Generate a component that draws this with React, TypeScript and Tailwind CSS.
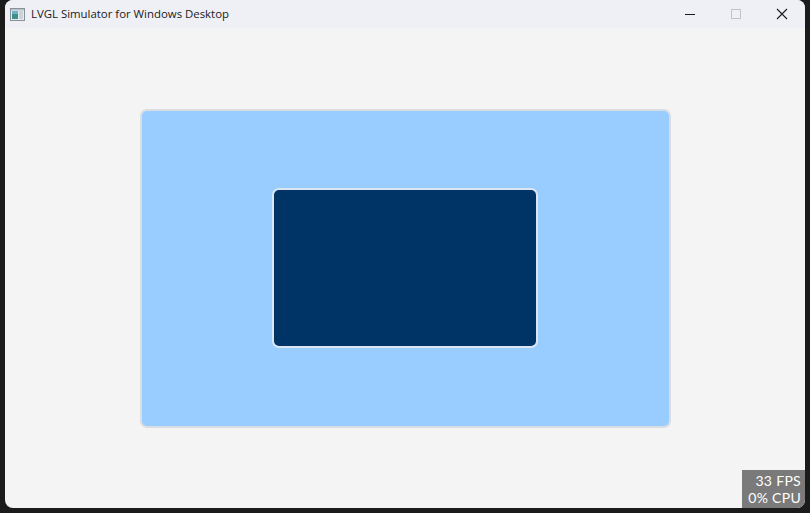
import React from 'react';

const AppIcon = () => (
  <svg width="15" height="13" viewBox="0 0 15 13">
    <rect x="0.5" y="0.5" width="14" height="12" fill="#e8ecef" stroke="#8a9299" />
    <rect x="2" y="3" width="6" height="8" fill="#3f8f8a" />
    <rect x="2" y="3" width="6" height="3" fill="#6fb3c8" />
    <rect x="9" y="3" width="4" height="8" fill="#c9d3d8" />
    <rect x="1" y="1" width="13" height="1.5" fill="#b8c2c8" />
  </svg>
);

export default function App() {
  return (
    <div className="w-[810px] h-[513px] bg-[#1b1b1b] px-[5px] pb-[5px]">
      <div className="w-[800px] h-[508px] rounded-lg overflow-hidden flex flex-col bg-[#f4f4f4]">
        {/* title bar */}
        <div className="h-[28px] bg-[#eff0f5] flex items-center shrink-0">
          <div className="ml-[5px] mt-[1px]">
            <AppIcon />
          </div>
          <span
            className="ml-[6px] text-[11.4px] text-[#1a1a1a]"
            style={{ fontFamily: '"Open Sans", "Noto Sans", sans-serif' }}
          >
            LVGL Simulator for Windows Desktop
          </span>
          <div className="ml-auto flex items-center h-full">
            <div className="w-[46px] h-full flex items-center justify-center">
              <div className="w-[10px] h-px bg-[#1a1a1a]" />
            </div>
            <div className="w-[46px] h-full flex items-center justify-center">
              <div className="w-[10px] h-[10px] border border-[#c4c4c4]" />
            </div>
            <div className="w-[46px] h-full flex items-center justify-center">
              <svg width="12" height="12" viewBox="0 0 12 12">
                <path d="M1 1 L11 11 M11 1 L1 11" stroke="#1a1a1a" strokeWidth="1.1" />
              </svg>
            </div>
          </div>
        </div>

        {/* screen */}
        <div className="relative flex-1 flex items-center justify-center">
          <div className="w-[531px] h-[319px] bg-[#99ccff] border-2 border-[#d9dee4] rounded-[7px] flex items-center justify-center">
            <div className="w-[266px] h-[160px] bg-[#003366] border-2 border-[#dbe6f2] rounded-[7px]" />
          </div>
          <div
            className="absolute right-0 bottom-0 w-[63px] h-[38px] bg-[#7a7a7a] text-white text-[14px] leading-[17px] tracking-[0.3px] text-right pr-[4px] pt-[2px]"
            style={{ fontFamily: 'Lato, "Open Sans", sans-serif' }}
          >
            <div>33 FPS</div>
            <div>0% CPU</div>
          </div>
        </div>
      </div>
    </div>
  );
}
